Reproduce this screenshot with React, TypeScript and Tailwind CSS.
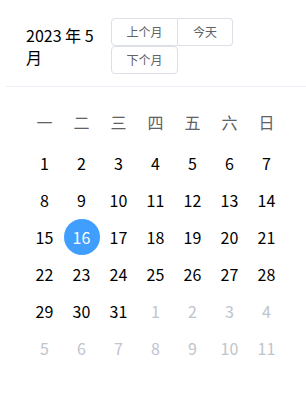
import React from 'react';

const weekdays = ['一', '二', '三', '四', '五', '六', '日'];

type Cell = { day: number; current: boolean };

const buildCells = (): Cell[] => {
  const cells: Cell[] = [];
  for (let d = 1; d <= 31; d++) cells.push({ day: d, current: true });
  for (let d = 1; d <= 11; d++) cells.push({ day: d, current: false });
  return cells;
};

export default function App() {
  const cells = buildCells();
  const rows: Cell[][] = [];
  for (let i = 0; i < cells.length; i += 7) rows.push(cells.slice(i, i + 7));

  return (
    <div
      className="w-[306px] h-[405px] bg-white pl-[6px] pt-[6px] text-black"
      style={{ fontFamily: '"Noto Sans CJK SC", "Noto Sans", sans-serif' }}
    >
      <div className="flex items-center gap-[6px] px-5 py-3 border-b border-[#ebeef5]">
        <div className="w-[79px] text-base leading-[22px]">2023 年 5 月</div>
        <div className="flex flex-wrap w-[122px] text-xs text-[#606266]">
          <button className="h-[28px] w-[67px] border border-[#dcdfe6] rounded-l-[4px] bg-white">上个月</button>
          <button className="h-[28px] w-[55px] border border-l-0 border-[#dcdfe6] rounded-r-[4px] bg-white">今天</button>
          <button className="h-[28px] w-[67px] border border-[#dcdfe6] rounded-[4px] bg-white">下个月</button>
        </div>
      </div>

      <div className="px-5 pt-3">
        <div className="grid grid-cols-7 w-[259px] h-[45px] items-center text-base text-[#606266]">
          {weekdays.map((w) => (
            <div key={w} className="text-center leading-6">
              {w}
            </div>
          ))}
        </div>
        {rows.map((row, ri) => (
          <div key={ri} className="grid grid-cols-7 w-[259px] h-[37px]">
            {row.map((c, ci) => {
              const selected = c.current && c.day === 16;
              return (
                <div key={ci} className="flex items-center justify-center">
                  <span
                    className={
                      'flex items-center justify-center w-9 h-9 rounded-full text-base ' +
                      (selected
                        ? 'bg-[#409eff] text-white'
                        : c.current
                        ? 'text-black'
                        : 'text-[#c0c4cc]')
                    }
                  >
                    {c.day}
                  </span>
                </div>
              );
            })}
          </div>
        ))}
      </div>
    </div>
  );
}
